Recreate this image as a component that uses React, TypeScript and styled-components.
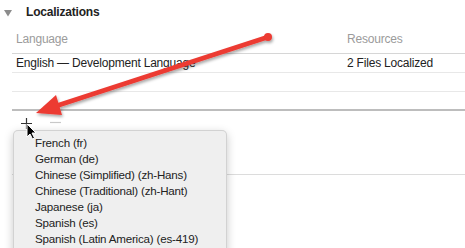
import React from "react";
import styled, { createGlobalStyle } from "styled-components";

const Global = createGlobalStyle`
  html, body { margin: 0; padding: 0; background: #ffffff; }
  body { font-family: "Liberation Sans", Arial, sans-serif; -webkit-font-smoothing: antialiased; }
  #root { position: relative; width: 465px; height: 248px; overflow: hidden; }
`;

const Page = styled.div`
  position: relative;
  width: 465px;
  height: 248px;
  overflow: hidden;
  background: #fff;
`;

const SectionHeader = styled.div`
  display: flex;
  align-items: center;
  height: 24px;
  padding-left: 4px;
  gap: 14px;
`;

const Toggle = styled.svg`
  position: relative;
  top: 1px;
`;

const Title = styled.span`
  font-size: 12px;
  letter-spacing: -0.2px;
  font-weight: bold;
  color: #222;
`;

const Table = styled.div`
  margin-left: 12px;
  display: flex;
  flex-direction: column;
`;

const Row = styled.div<{ $h: number; $line: string; $lineW?: number; $head?: boolean }>`
  display: grid;
  grid-template-columns: 331px 1fr;
  align-items: center;
  height: ${(p) => p.$h}px;
  border-bottom: ${(p) => p.$lineW ?? 1}px solid ${(p) => p.$line};
  font-size: 12px;
  letter-spacing: -0.2px;
  color: ${(p) => (p.$head ? "#9b9b9b" : "#222")};
  padding-left: 4px;
  box-sizing: border-box;
`;

const Footer = styled.div`
  display: flex;
  align-items: center;
  height: 24px;
  padding-left: 21px;
  gap: 18px;
`;

const Divider = styled.div`
  margin-top: 39px;
  margin-left: 12px;
  height: 1px;
  background: #dcdcdc;
`;

const Menu = styled.div`
  position: absolute;
  left: 13px;
  top: 130px;
  width: 214px;
  height: 140px;
  background: #efefef;
  border: 1px solid rgba(0, 0, 0, 0.12);
  border-radius: 5px;
  box-shadow: 0 3px 10px rgba(0, 0, 0, 0.22);
  padding-top: 4px;
  box-sizing: border-box;
`;

const MenuItem = styled.div`
  height: 16px;
  line-height: 16px;
  padding-left: 21px;
  font-size: 11.6px;
  letter-spacing: -0.2px;
  color: #222;
  white-space: nowrap;
`;

const Overlay = styled.svg`
  position: absolute;
  left: 0;
  top: 0;
  pointer-events: none;
`;

const items = [
  "French (fr)",
  "German (de)",
  "Chinese (Simplified) (zh-Hans)",
  "Chinese (Traditional) (zh-Hant)",
  "Japanese (ja)",
  "Spanish (es)",
  "Spanish (Latin America) (es-419)",
];

export default function App() {
  return (
    <Page>
      <Global />
      <SectionHeader>
        <Toggle width="8" height="8" viewBox="0 0 8 8">
          <polygon points="0,1 8,1 4,7.5" fill="#8c8c8c" />
        </Toggle>
        <Title>Localizations</Title>
      </SectionHeader>
      <Table>
        <Row $h={30} $line="#d6d6d6" $head>
          <span>Language</span>
          <span>Resources</span>
        </Row>
        <Row $h={19} $line="#e8e8e8">
          <span>English — Development Language</span>
          <span>2 Files Localized</span>
        </Row>
        <Row $h={19} $line="#e8e8e8">
          <span />
          <span />
        </Row>
        <Row $h={19} $line="#bdbdbd" $lineW={2}>
          <span />
          <span />
        </Row>
      </Table>
      <Footer>
        <svg width="11" height="11" viewBox="0 0 11 11">
          <path d="M5.5 0 V11 M0 5.5 H11" stroke="#333" strokeWidth="1.2" />
        </svg>
        <svg width="11" height="11" viewBox="0 0 11 11">
          <path d="M0 4.5 H11" stroke="#c8c8c8" strokeWidth="1.2" />
        </svg>
      </Footer>
      <Divider />
      <Menu>
        {items.map((t) => (
          <MenuItem key={t}>{t}</MenuItem>
        ))}
      </Menu>
      <Overlay width="465" height="248" viewBox="0 0 465 248">
        <defs>
          <filter id="sh" x="-10%" y="-30%" width="120%" height="160%">
            <feDropShadow dx="1" dy="2" stdDeviation="1.5" floodColor="#000" floodOpacity="0.35" />
          </filter>
        </defs>
        <g filter="url(#sh)">
          <line x1="268" y1="37" x2="56" y2="106" stroke="#ec3a33" strokeWidth="4.5" strokeLinecap="round" />
          <circle cx="268" cy="37" r="4" fill="#ec3a33" />
          <polygon points="36,113 56,95 62,115" fill="#ec3a33" />
        </g>
        <path
          d="M27 124 L27 137 L30 134 L32.5 139 L34.5 138 L32 133 L36 133 Z"
          fill="#000"
          stroke="#fff"
          strokeWidth="1"
          strokeLinejoin="round"
        />
      </Overlay>
    </Page>
  );
}
